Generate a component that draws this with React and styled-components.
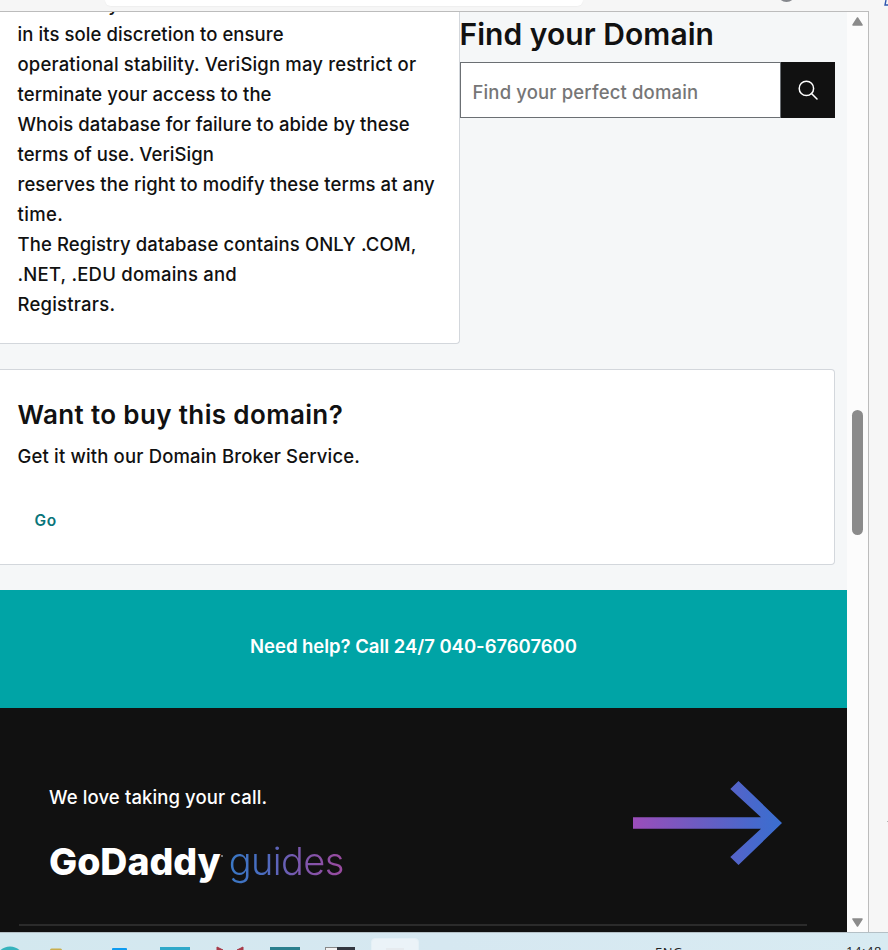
import React from 'react';
import styled, { createGlobalStyle } from 'styled-components';

const GlobalStyle = createGlobalStyle`
  * { box-sizing: border-box; }
  body { margin: 0; background: #f6f6f6; overflow: hidden; }
`;

const Screen = styled.div`
  width: 888px;
  height: 950px;
  display: flex;
  flex-direction: column;
  overflow: hidden;
  background: #f6f6f6;
  color: #111;
  font-family: Inter, "Liberation Sans", sans-serif;
`;

const Toolbar = styled.header`
  flex: none;
  height: 11px;
  display: flex;
  align-items: flex-start;
  overflow: hidden;
`;

const AddressBar = styled.div`
  width: 478px;
  height: 6px;
  margin-left: 105px;
  border-radius: 0 0 14px 14px;
  background: #fff;
  box-shadow: 0 1px 1px #efefef;
`;

const ToolbarIcon = styled.svg`
  flex: none;
  width: ${(p) => p.$width}px;
  height: 8px;
  margin-left: ${(p) => p.$gap}px;
`;

const Middle = styled.div`
  flex: none;
  height: 921px;
  display: flex;
`;

const BrowserView = styled.div`
  width: 869px;
  display: flex;
  border-top: 1px solid #bcbcbc;
  border-right: 1px solid #bcbcbc;
`;

const SideStrip = styled.aside`
  flex: 1;
  display: flex;
  align-items: flex-end;
  justify-content: flex-end;
  padding-bottom: 110px;
`;

const Speck = styled.i`
  width: 1px;
  height: 1px;
  background: #b5b5b5;
`;

const Page = styled.main`
  width: 847px;
  display: flex;
  flex-direction: column;
  overflow: hidden;
  background: #f5f7f8;
`;

const Columns = styled.div`
  flex: none;
  height: 332px;
  display: flex;
  align-items: flex-start;
  overflow: hidden;
`;

const Card = styled.section`
  flex: none;
  background: #fff;
  border: 1px solid #d3d7dc;
  border-left: 0;
  border-radius: 0 4px 4px 0;
`;

const WhoisCard = styled(Card)`
  width: 460px;
  height: 332px;
  display: flex;
  flex-direction: column;
  justify-content: flex-end;
  border-top: 0;
  border-top-right-radius: 0;
  padding: 0 0 24px 17.5px;
`;

const Text = styled.div`
  flex: none;
  white-space: nowrap;
  font-size: ${(p) => p.$size || 18.5}px;
  line-height: ${(p) => p.$line || 30}px;
  font-weight: ${(p) => p.$weight || 450};
  letter-spacing: ${(p) => p.$spacing || 0}px;
`;

const FinderTitle = styled(Text).attrs({ as: 'h2' })`
  margin: 2px 0 8px -0.5px;
`;

const Finder = styled.section`
  width: 375px;
  display: flex;
  flex-direction: column;
`;

const SearchForm = styled.div`
  display: flex;
  height: 56px;
`;

const SearchField = styled.div`
  width: 321px;
  padding: 14px 0 0 11.5px;
  background: #fff;
  border: 1px solid #6b6f73;
  color: #767676;
`;

const SearchButton = styled.button`
  width: 54px;
  padding: 0 1px 0 0;
  border: 0;
  background: #111;
  display: flex;
  align-items: center;
  justify-content: center;
`;

const BrokerCard = styled(Card)`
  width: 835px;
  height: 196px;
  margin: 25px 0;
  padding: 25px 0 0 17.5px;
`;

const BrokerTitle = styled(Text).attrs({ as: 'h3' })`
  margin: 0 0 6px;
`;

const GoLink = styled(Text)`
  margin: 35px 0 0 17px;
  color: #09757a;
`;

const HelpBand = styled.section`
  flex: none;
  height: 118px;
  display: flex;
  justify-content: center;
  padding: 41px 20px 0 0;
  background: #00a4a6;
  color: #fff;
`;

const Footer = styled.footer`
  flex: 1;
  display: flex;
  flex-direction: column;
  background: #111;
  color: #fff;
`;

const FooterRow = styled.div`
  flex: none;
  height: 216px;
  display: flex;
  justify-content: space-between;
  padding: 73px 65px 0 49px;
`;

const CallLine = styled(Text)`
  padding-top: 1px;
`;

const Rule = styled.div`
  height: 2px;
  width: 788px;
  margin-left: 19px;
  background: #2b2b2b;
`;

const Brand = styled.div`
  display: flex;
  align-items: baseline;
  margin-top: 24px;
`;

const Dot = styled.i`
  align-self: flex-start;
  width: 2px;
  height: 2px;
  margin: 19px 6px 0 0;
  border-radius: 1px;
  background: #999;
`;

const Guides = styled(Text)`
  padding-bottom: 4px;
  color: transparent;
  background: linear-gradient(90deg, #3a78c4 0%, #4a6cc0 30%, #7a58ae 60%, #9a4a9e 100%);
  background-clip: text;
  -webkit-background-clip: text;
`;

const Scrollbar = styled.div`
  width: 21px;
  display: flex;
  flex-direction: column;
  align-items: center;
  background: #fcfcfc;
  padding: 5px 0;
`;

const Thumb = styled.div`
  width: 11px;
  height: 125px;
  margin: 384px 0 auto;
  border-radius: 6px;
  background: #8b8b8b;
`;

const Taskbar = styled.footer`
  flex: none;
  height: 18px;
  border-top: 1px solid #b4c0c6;
  background: linear-gradient(90deg, #d3e8ef, #d6e8f1 50%, #d8ebf2);
  display: flex;
  overflow: hidden;
`;

const TaskIcons = styled.svg`
  flex: none;
  width: 371px;
  height: 17px;
`;

const ActiveTask = styled.div`
  width: 48px;
  height: 30px;
  margin-top: 5px;
  border-radius: 4px;
  border: 1px solid #e4f0f6;
  background: #ebf3f8;
  display: flex;
  justify-content: center;
  padding-top: 9px;
`;

const TaskHint = styled.div`
  width: 18px;
  height: 8px;
  background: #e6ebef;
`;

const TrayText = styled.div`
  margin: ${(p) => p.$top}px 0 0 ${(p) => p.$gap}px;
  font: 13px/17px "Open Sans", "Noto Sans", sans-serif;
  letter-spacing: ${(p) => p.$spacing}px;
  white-space: nowrap;
  color: #222;
`;

const WHOIS = [
  ['to restrict your access to the Whois database', 0.06],
  ['in its sole discretion to ensure', 0.08],
  ['operational stability. VeriSign may restrict or', 0.16],
  ['terminate your access to the', 0.08],
  ['Whois database for failure to abide by these', 0.07],
  ['terms of use. VeriSign', 0.05],
  ['reserves the right to modify these terms at any', 0.09],
  ['time.', 0.4],
  ['The Registry database contains ONLY .COM,', 0.1],
  ['.NET, .EDU domains and', 0.22],
  ['Registrars.', 0.22],
];

export default function App() {
  return (
    <Screen>
      <GlobalStyle />
      <Toolbar>
        <AddressBar />
        <ToolbarIcon $width={22} $gap={192} viewBox="0 0 22 8">
          <circle cx="11.5" cy="-7" r="9" fill="#85878c" />
        </ToolbarIcon>
        <ToolbarIcon $width={5} $gap={86} viewBox="0 0 5 8">
          <path d="M3 0L2 5H5" fill="none" stroke="#3157b0" strokeWidth="1.4" />
        </ToolbarIcon>
      </Toolbar>
      <Middle>
        <BrowserView>
          <Page>
            <Columns>
              <WhoisCard>
                {WHOIS.map(([line, spacing]) => (
                  <Text key={line} $spacing={spacing}>{line}</Text>
                ))}
              </WhoisCard>
              <Finder>
                <FinderTitle $size={30} $line={40} $weight={600} $spacing={0.05}>Find your Domain</FinderTitle>
                <SearchForm>
                  <SearchField>
                    <Text $spacing={0.15}>Find your perfect domain</Text>
                  </SearchField>
                  <SearchButton aria-label="Search">
                    <svg width="20" height="20" viewBox="0 0 20 20" fill="none" stroke="#fff" strokeWidth="1.5">
                      <circle cx="8.4" cy="8.4" r="7.2" />
                      <path d="M13.5 13.5L19 19" strokeLinecap="round" />
                    </svg>
                  </SearchButton>
                </SearchForm>
              </Finder>
            </Columns>
            <BrokerCard>
              <BrokerTitle $size={26} $line={40} $weight={600} $spacing={0.36}>Want to buy this domain?</BrokerTitle>
              <Text $spacing={0.16}>Get it with our Domain Broker Service.</Text>
              <GoLink $size={15.5} $weight={600} $spacing={0.6}>Go</GoLink>
            </BrokerCard>
            <HelpBand>
              <Text $weight={640} $spacing={-0.03}>Need help? Call 24/7 040-67607600</Text>
            </HelpBand>
            <Footer>
              <FooterRow>
                <div>
                  <CallLine $weight={500} $spacing={0.114}>We love taking your call.</CallLine>
                  <Brand>
                    <Text $size={37.5} $line={50} $weight={800} $spacing={-0.05}>GoDaddy</Text>
                    <Dot />
                    <Guides $size={38} $line={50} $weight={300} $spacing={-0.609}>guides</Guides>
                  </Brand>
                </div>
                <svg width="149" height="84" viewBox="0 0 149 84">
                  <defs>
                    <linearGradient id="arrow" x1="0" y1="0" x2="149" y2="0" gradientUnits="userSpaceOnUse">
                      <stop offset="0" stopColor="#9b4dba" />
                      <stop offset="0.45" stopColor="#6b5cc2" />
                      <stop offset="0.8" stopColor="#4868cc" />
                      <stop offset="1" stopColor="#3a6fd0" />
                    </linearGradient>
                  </defs>
                  <path fill="url(#arrow)" d="M0 36.3H128L97.3 8L105.5 0L149 42L105.5 84L97.3 76L128 47.7H0Z" />
                </svg>
              </FooterRow>
              <Rule />
            </Footer>
          </Page>
          <Scrollbar>
            <svg width="11" height="9" viewBox="0 0 11 9">
              <path d="M5.5 1L10 8H1Z" fill="#8b8b8b" stroke="#8b8b8b" strokeWidth="1.5" strokeLinejoin="round" />
            </svg>
            <Thumb />
            <svg width="11" height="9" viewBox="0 0 11 9">
              <path d="M5.5 8L1 1H10Z" fill="#8b8b8b" stroke="#8b8b8b" strokeWidth="1.5" strokeLinejoin="round" />
            </svg>
          </Scrollbar>
        </BrowserView>
        <SideStrip>
          <Speck />
        </SideStrip>
      </Middle>
      <Taskbar>
        <TaskIcons viewBox="0 0 371 17">
          <circle cx="10" cy="28" r="14.5" fill="#35b3bd" />
          <rect x="50" y="15.5" width="12" height="4" rx="1.5" fill="#c9ae4c" />
          <rect x="112" y="15" width="15" height="4" rx="1" fill="#0d9bf0" />
          <rect x="160" y="14" width="30" height="3" fill="#2fa9c9" />
          <path d="M217 14L223 17H217ZM243 14L237 17H243Z" fill="#a83b48" stroke="#a83b48" />
          <rect x="270" y="14" width="30" height="3" fill="#2b7f8d" />
          <rect x="325.5" y="14.5" width="12" height="6" fill="#f2f2f2" stroke="#888" />
          <rect x="337" y="14" width="18" height="3" fill="#32363f" />
        </TaskIcons>
        <ActiveTask>
          <TaskHint />
        </ActiveTask>
        <TrayText $top={11} $gap={236} $spacing={0.5}>ENG</TrayText>
        <TrayText $top={10} $gap={163} $spacing={0.6}>14:48</TrayText>
      </Taskbar>
    </Screen>
  );
}
